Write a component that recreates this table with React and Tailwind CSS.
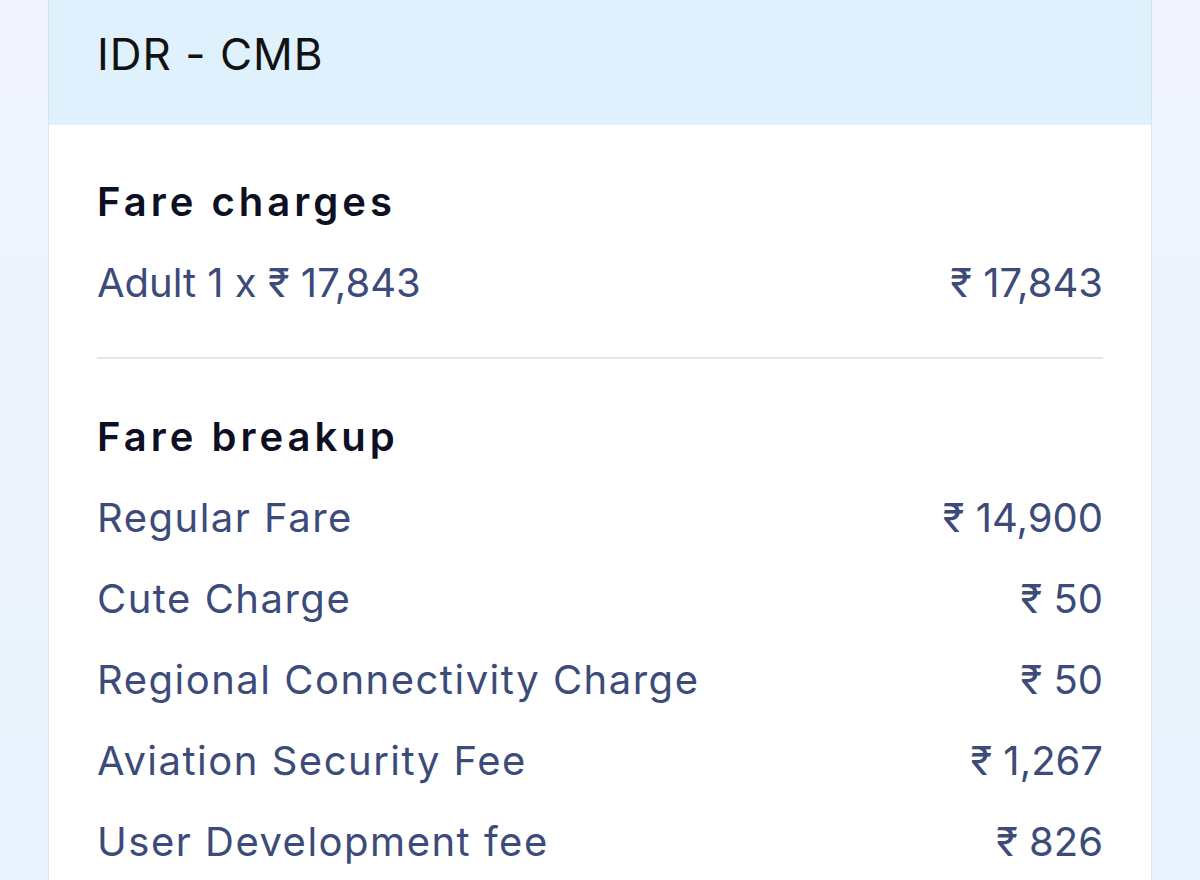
import React from 'react';

const breakup = [
  { label: 'Regular Fare', amount: '₹ 14,900' },
  { label: 'Cute Charge', amount: '₹ 50' },
  { label: 'Regional Connectivity Charge', amount: '₹ 50' },
  { label: 'Aviation Security Fee', amount: '₹ 1,267' },
  { label: 'User Development fee', amount: '₹ 826' },
];

const Row = ({ label, amount, numericLabel }) => (
  <div className="flex h-[81px] items-center justify-between text-[40px] text-[#3c4b79]">
    <span className={numericLabel ? '' : 'tracking-[1.5px]'}>{label}</span>
    <span>{amount}</span>
  </div>
);

const Heading = ({ children }) => (
  <div className="flex h-[81px] items-center text-[40px] font-semibold tracking-[4px] text-[#0d1022]">
    {children}
  </div>
);

export default function App() {
  return (
    <div
      className="h-[880px] w-[1200px] overflow-hidden bg-gradient-to-b from-[#f1f4fd] to-[#e8f2fc]"
      style={{ fontFamily: 'Inter, "Noto Sans", sans-serif' }}
    >
      <div className="mx-[48px] h-full border-x border-[#dde3ec] bg-white">
        {/* Route header */}
        <div className="flex h-[125px] items-center bg-[#dff1fc] px-[48px] pb-[18px] text-[44px] tracking-[1px] text-[#121212]">
          IDR - CMB
        </div>

        {/* Fare details */}
        <div className="px-[48px] pt-[36px]">
          <Heading>Fare charges</Heading>
          <Row label="Adult 1 x ₹ 17,843" amount="₹ 17,843" numericLabel />
          <div className="mt-[34px] h-[2px] bg-[#e3e6ea]" />
          <div className="mt-[37px]">
            <Heading>Fare breakup</Heading>
            {breakup.map((item) => (
              <Row key={item.label} label={item.label} amount={item.amount} />
            ))}
          </div>
        </div>
      </div>
    </div>
  );
}
